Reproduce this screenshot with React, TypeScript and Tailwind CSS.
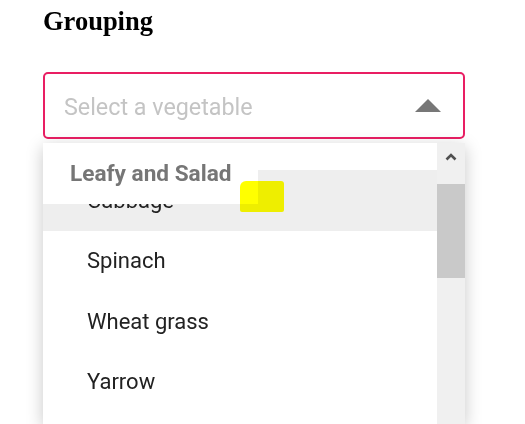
const items = ["Cabbage", "Spinach", "Wheat grass", "Yarrow"];

export default function App() {
  return (
    <div className="pl-[43px] pt-[6px] font-['Roboto',sans-serif] bg-white min-h-[424px] overflow-hidden">
      <h2 className="font-['Liberation_Serif',serif] font-bold text-[26.5px] leading-[30px] text-black">
        Grouping
      </h2>

      {/* SELECT */}
      <div className="mt-[36px] w-[422px] h-[67px] border-2 border-[#e91e63] rounded-[5px] flex items-center justify-between pl-[19px] pr-[22px]">
        <span className="mt-[3px] text-[23.3px] leading-[28px] text-[#c4c4c4]">Select a vegetable</span>
        <svg width="26" height="13" viewBox="0 0 26 13">
          <path d="M0 13 L13 0 L26 13 Z" fill="#777" />
        </svg>
      </div>

      {/* MENU */}
      <div className="mt-[4px] w-[422px] h-[281px] flex bg-white shadow-[0_4px_16px_rgba(0,0,0,0.22)]">
        <div className="relative flex-1 overflow-hidden pt-[27px]">
          {items.map((item, i) => (
            <div
              key={item}
              className={
                "h-[60.5px] flex items-center pl-[44px] text-[22px] text-[#222] " +
                (i === 0 ? "bg-[#eeeeee]" : "bg-white")
              }
            >
              {item}
            </div>
          ))}

          {/* sticky group header */}
          <div className="absolute top-0 left-0 h-[61px] px-[27px] flex items-center bg-white text-[22.6px] font-bold text-[#767676]">
            Leafy and Salad
          </div>

          {/* marker highlight */}
          <div className="absolute left-[197px] top-[38px] w-[44px] h-[31px] bg-[#ffff00] mix-blend-multiply rounded-tl-[6px] rounded-tr-[3px] rounded-b-[2px]" />
        </div>

        {/* scrollbar */}
        <div className="w-[28px] bg-[#f0f0f0] flex flex-col">
          <div className="h-[41px] flex items-start justify-center pt-[9px]">
            <svg width="12" height="9" viewBox="0 0 12 9">
              <path d="M1.5 7.5 L6 3 L10.5 7.5" stroke="#505050" strokeWidth="2.6" fill="none" />
            </svg>
          </div>
          <div className="h-[94px] bg-[#c9c9c9]" />
        </div>
      </div>
    </div>
  );
}
